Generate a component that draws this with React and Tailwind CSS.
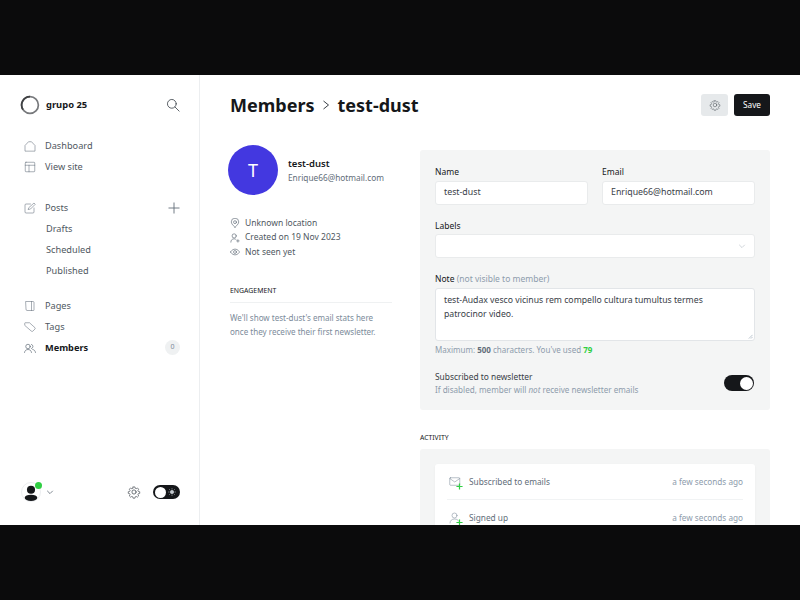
import React from "react";

const font = { fontFamily: '"Noto Sans", sans-serif' };

const Ico = ({ children, className = "w-[12px] h-[12px]", sw = 1.1 }) => (
  <svg viewBox="0 0 24 24" fill="none" stroke="currentColor" strokeWidth={sw} strokeLinecap="round" strokeLinejoin="round" className={className}>
    {children}
  </svg>
);

const Gear = ({ className, sw = 1.2 }) => (
  <Ico className={className} sw={sw}>
    <path d="M10.3 3.2h3.4l.6 2.6 1.9.8 2.3-1.4 2.4 2.4-1.4 2.3.8 1.9 2.6.6v3.1l-2.6.6-.8 1.9 1.4 2.3-2.4 2.4-2.3-1.4-1.9.8-.6 2.6h-3.4l-.6-2.6-1.9-.8-2.3 1.4-2.4-2.4 1.4-2.3-.8-1.9-2.6-.6v-3.1l2.6-.6.8-1.9-1.4-2.3 2.4-2.4 2.3 1.4 1.9-.8z" transform="translate(1.2 .4) scale(.9)" />
    <circle cx="12" cy="12" r="3.6" />
  </Ico>
);

const NavRow = ({ icon, children, bold, right, sub }) => (
  <div className={`h-[21px] flex items-center ${sub ? "pl-[46px]" : "pl-[24px]"} pr-[19px]`}>
    {icon && <span className="w-[21px] shrink-0 flex text-[#626d79]">{icon}</span>}
    <span className={`text-[9.2px] ${bold ? "font-bold text-[#15171a]" : "text-[#4f5861]"}`}>{children}</span>
    {right && <span className="ml-auto flex items-center">{right}</span>}
  </div>
);

const Meta = ({ icon, children }) => (
  <div className="h-[14.5px] flex items-center text-[8.5px] text-[#4f5861]">
    <span className="w-[15px] flex text-[#626d79]">{icon}</span>
    {children}
  </div>
);

const Label = ({ children }) => <div className="text-[8.5px] leading-[12px] text-[#15171a]">{children}</div>;

const inputCls = "bg-white border border-[#e9ebec] rounded-[3px] h-[24px] flex items-center px-[8px] text-[8.8px] text-[#394047]";

const Activity = ({ icon, text, last, first }) => (
  <div className={`mx-[12px] h-[36px] flex items-center ${last ? "" : "border-b border-[#f1f3f4]"} ${first ? "pt-[1px]" : ""}`}>
    <span className="w-[22px] pl-[2px] flex text-[#7c8b9a] relative">{icon}</span>
    <span className="text-[8.3px] text-[#626d79]">{text}</span>
    <span className="ml-auto text-[8.2px] text-[#8e9cac]">a few seconds ago</span>
  </div>
);

export default function App() {
  return (
    <div className="w-[800px] h-[600px] bg-[#0b0b0c] flex flex-col overflow-hidden" style={font}>
      <div className="h-[75px] shrink-0" />
      <div className="h-[450px] shrink-0 bg-white flex overflow-hidden">
        {/* sidebar */}
        <aside className="w-[200px] shrink-0 border-r border-[#eceef0] flex flex-col">
          <div className="h-[60px] shrink-0 flex items-center pl-[20px] pr-[19px]">
            <svg viewBox="0 0 20 20" className="w-[20px] h-[20px] mr-[6px]">
              <circle cx="10" cy="10" r="8.4" fill="none" stroke="#77797c" strokeWidth="1.7" />
              <path d="M10 1.600A8.400 8.400 0 0 0 3 14.600" fill="none" stroke="#3f4143" strokeWidth="1.7" />
            </svg>
            <span className="text-[9.4px] font-bold text-[#15171a]">grupo 25</span>
            <span className="ml-auto text-[#394047] flex">
              <Ico className="w-[14px] h-[14px]" sw={1.4}>
                <circle cx="10" cy="10" r="7.5" />
                <path d="M15.5 15.5 22.5 22.5" />
              </Ico>
            </span>
          </div>
          <div>
            <NavRow icon={<Ico><path d="M2 21.500V11l7-7.500h6l7 7.500v10.500z" /></Ico>}>Dashboard</NavRow>
            <NavRow icon={<Ico><rect x="2.500" y="2.500" width="19" height="19" rx="1.500" /><path d="M2.500 8.500h19M10 8.500v13" /></Ico>}>View site</NavRow>
          </div>
          <div className="pt-[20px]">
            <NavRow
              icon={<Ico><path d="M13 4H4a2 2 0 0 0-2 2v14a2 2 0 0 0 2 2h14a2 2 0 0 0 2-2v-8" /><path d="M10 11 20 2l2.500 2.500L13 14l-4 1z" /></Ico>}
              right={<svg viewBox="0 0 12 12" className="w-[12px] h-[12px] text-[#626d79]" stroke="currentColor" strokeWidth="0.9"><path d="M6 .5v11M.5 6h11" /></svg>}
            >Posts</NavRow>
            <NavRow sub>Drafts</NavRow>
            <NavRow sub>Scheduled</NavRow>
            <NavRow sub>Published</NavRow>
          </div>
          <div className="pt-[14px]">
            <NavRow icon={<Ico><path d="M4 3h14a2 2 0 0 1 2 2v15a1 1 0 0 1-1 1H6a2 2 0 0 1-2-2z" /><path d="M15 3v18" /></Ico>}>Pages</NavRow>
            <NavRow icon={<Ico><path d="M1.500 7V3.500a1 1 0 0 1 1-1H11l11 10a2 2 0 0 1 0 2.500l-4.500 4.500a2 2 0 0 1-2.500 0z" transform="translate(0 1)" /></Ico>}>Tags</NavRow>
            <NavRow
              bold
              icon={<Ico sw={1.4}><circle cx="8" cy="9" r="4.500" /><path d="M1 21c.5-4 3.500-6 7-6s6.500 2 7 6" /><path d="M15 4.800a4.500 4.500 0 0 1 0 8.400M17.500 15c3 .5 5 2.500 5.500 6" /></Ico>}
              right={<span className="w-[15px] h-[15px] rounded-full bg-[#eff1f2] text-[7px] text-[#7c8b9a] flex items-center justify-center">0</span>}
            >Members</NavRow>
          </div>
          <div className="mt-auto h-[66px] shrink-0 flex items-center pl-[21px] pr-[19px]">
            <div className="relative w-[20px] h-[20px] rounded-full border border-[#eceef0] overflow-visible">
              <svg viewBox="0 0 20 20" className="w-full h-full">
                <circle cx="10" cy="7.500" r="4.500" fill="#15171a" />
                <ellipse cx="10" cy="16.500" rx="7" ry="3.500" fill="#15171a" />
              </svg>
              <span className="absolute top-[-1px] right-[-2px] w-[7px] h-[7px] rounded-full bg-[#30cf43]" />
            </div>
            <svg viewBox="0 0 10 10" className="w-[8px] h-[8px] ml-[5px] text-[#626d79]" fill="none" stroke="currentColor" strokeWidth="1"><path d="M1.500 3.500 5 7l3.500-3.500" /></svg>
            <span className="ml-auto mr-[12px] flex text-[#394047]"><Gear className="w-[14px] h-[14px]" /></span>
            <div className="w-[27px] h-[14px] rounded-full bg-[#15171a] flex items-center pl-[1.500px] pr-[4px] justify-between">
              <span className="w-[11px] h-[11px] rounded-full bg-white" />
              <svg viewBox="0 0 10 10" className="w-[8px] h-[8px] text-[#c5cbd1]" fill="none" stroke="currentColor" strokeWidth="1"><circle cx="5" cy="5" r="2" fill="currentColor" /><path d="M5 .5v1.200M5 8.300v1.200M.5 5h1.200M8.300 5h1.200M1.800 1.800l.9.9M7.300 7.300l.9.9M1.800 8.200l.9-.9M7.300 2.700l.9-.9" /></svg>
            </div>
          </div>
        </aside>

        {/* main */}
        <main className="flex-1 min-w-0 pl-[30px] pr-[30px] overflow-hidden">
          <header className="h-[60px] flex items-center">
            <h1 className="text-[18px] font-bold text-[#15171a] flex items-center">
              Members
              <svg viewBox="0 0 10 10" className="w-[10px] h-[10px] mx-[6.500px] text-[#394047]" fill="none" stroke="currentColor" strokeWidth="1"><path d="M2.500 1 7.500 5l-5 4" /></svg>
              test-dust
            </h1>
            <div className="ml-auto flex gap-[6px]">
              <span className="w-[27px] h-[22px] rounded-[3px] bg-[#e6e9eb] flex items-center justify-center text-[#394047]"><Gear className="w-[12px] h-[12px]" sw={1} /></span>
              <span className="w-[36px] h-[22px] rounded-[3px] bg-[#15171a] text-white text-[8.200px] flex items-center justify-center">Save</span>
            </div>
          </header>

          <div className="flex pt-[15px]">
            {/* left column */}
            <div className="w-[190px] shrink-0 -mt-[5px]">
              <div className="flex items-center">
                <div className="w-[50px] h-[50px] -ml-[2px] rounded-full bg-[#4338e0] text-white text-[18px] flex items-center justify-center">T</div>
                <div className="ml-[10px] mt-[1px]">
                  <div className="text-[9.500px] font-semibold leading-[14px] text-[#15171a]">test-dust</div>
                  <div className="text-[8.300px] leading-[14px] text-[#626d79]">Enrique66@hotmail.com</div>
                </div>
              </div>
              <div className="mt-[21px]">
                <Meta icon={<Ico className="w-[10px] h-[10px]" sw={1.6}><path d="M12 22s9-6.500 9-12.500a9 9 0 0 0-18 0C3 15.500 12 22 12 22z" /><circle cx="12" cy="10" r="3.500" /></Ico>}>Unknown location</Meta>
                <Meta icon={<Ico className="w-[10px] h-[10px]" sw={1.6}><circle cx="10" cy="7" r="5" /><path d="M2 22c0-5 3-8 8-8 2 0 3.500.5 4.500 1.500M19 16v6M16 19h6" /></Ico>}>Created on 19 Nov 2023</Meta>
                <Meta icon={<Ico className="w-[10px] h-[10px]" sw={1.6}><path d="M1 12s4-7 11-7 11 7 11 7-4 7-11 7-11-7-11-7z" /><circle cx="12" cy="12" r="3.500" /></Ico>}>Not seen yet</Meta>
              </div>
              <div className="mt-[25px] w-[162px] border-b border-[#eff1f2] pb-[5px] text-[6.900px] leading-[12px] text-[#15171a] uppercase">Engagement</div>
              <p className="mt-[8px] w-[162px] text-[8.050px] leading-[14px] text-[#7c8b9a]">We'll show test-dust's email stats here once they receive their first newsletter.</p>
            </div>

            {/* right column */}
            <div className="w-[350px] shrink-0">
              <div className="bg-[#f4f5f5] rounded-[3px] h-[260px] pt-[16px] px-[15px]">
                <div className="flex gap-[14px]">
                  <div className="flex-1 min-w-0">
                    <Label>Name</Label>
                    <div className={`${inputCls} mt-[3px] w-[153px]`}>test-dust</div>
                  </div>
                  <div className="w-[153px]">
                    <Label>Email</Label>
                    <div className={`${inputCls} mt-[3px]`}>Enrique66@hotmail.com</div>
                  </div>
                </div>
                <div className="mt-[15px]">
                  <Label>Labels</Label>
                  <div className={`${inputCls} mt-[2px] justify-end`}>
                    <svg viewBox="0 0 10 10" className="w-[8px] h-[8px] text-[#b7bfc7]" fill="none" stroke="currentColor" strokeWidth="0.8"><path d="M1.500 3.500 5 7l3.500-3.500" /></svg>
                  </div>
                </div>
                <div className="mt-[15px]">
                  <Label>Note <span className="text-[#8e9cac]">(not visible to member)</span></Label>
                  <div className="relative bg-white border border-[#e2e5e8] rounded-[3px] mt-[3px] h-[53px] px-[8px] py-[4px] text-[8.700px] leading-[14px] text-[#394047]">
                    test-Audax vesco vicinus rem compello cultura tumultus termes patrocinor video.
                    <svg viewBox="0 0 6 6" className="absolute right-[1px] bottom-[1px] w-[5px] h-[5px] text-[#8e9cac]" stroke="currentColor" strokeWidth="0.7"><path d="M1 5.500 5.500 1M3.500 5.500l2-2" /></svg>
                  </div>
                </div>
                <div className="mt-[3px] text-[8px] leading-[12px] text-[#8e9cac]">
                  Maximum: <b className="text-[#626d79]">500</b> characters. You've used <b className="text-[#30cf43]">79</b>
                </div>
                <div className="mt-[14px] flex items-center">
                  <div>
                    <div className="text-[8.400px] leading-[13px] text-[#394047]">Subscribed to newsletter</div>
                    <div className="text-[8.100px] leading-[13px] text-[#8e9cac]">If disabled, member will <i>not</i> receive newsletter emails</div>
                  </div>
                  <div className="ml-auto mr-[1px] w-[30px] h-[16px] rounded-full bg-[#15171a] flex items-center justify-end pr-[1.500px]">
                    <span className="w-[13px] h-[13px] rounded-full bg-white" />
                  </div>
                </div>
              </div>

              <div className="mt-[22px] text-[6.800px] leading-[12px] text-[#15171a] uppercase">Activity</div>
              <div className="mt-[5px] bg-[#f4f5f5] rounded-[3px] pt-[15px] px-[15px] h-[120px]">
                <div className="bg-white rounded-[3px] shadow-[0_1px_3px_rgba(0,0,0,0.04)]">
                  <Activity
                    first
                    text="Subscribed to emails"
                    icon={<>
                      <Ico className="w-[12px] h-[12px]"><rect x="1.500" y="3.500" width="20" height="15" rx="1.500" /><path d="M1.500 5l10 7 10-7" /></Ico>
                      <svg viewBox="0 0 8 8" className="absolute left-[9px] top-[7px] w-[7px] h-[7px] text-[#30cf43]" stroke="currentColor" strokeWidth="1.400"><path d="M4 .5v7M.5 4h7" /></svg>
                    </>}
                  />
                  <Activity
                    last
                    text="Signed up"
                    icon={<>
                      <Ico className="w-[12px] h-[12px]"><circle cx="11" cy="7" r="5" /><path d="M2 22c0-5 4-8 9-8s7 2 8 4" /></Ico>
                      <svg viewBox="0 0 8 8" className="absolute left-[9px] top-[7px] w-[7px] h-[7px] text-[#30cf43]" stroke="currentColor" strokeWidth="1.400"><path d="M4 .5v7M.5 4h7" /></svg>
                    </>}
                  />
                </div>
              </div>
            </div>
          </div>
        </main>
      </div>
      <div className="h-[75px] shrink-0" />
    </div>
  );
}
